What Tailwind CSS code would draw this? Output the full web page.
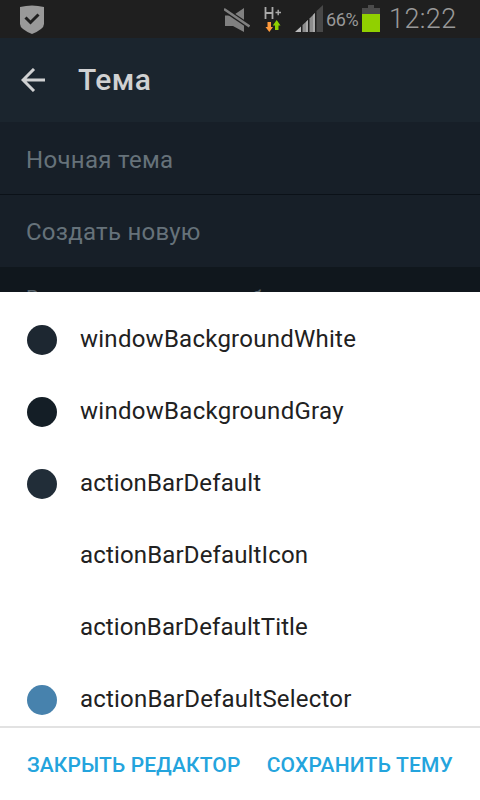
<!DOCTYPE html>
<html lang="ru">

<head>
  <meta charset="UTF-8" />
  <meta name="viewport" content="width=device-width, initial-scale=1.0" />
  <title>Тема</title>
  <script src="https://cdn.jsdelivr.net/npm/@tailwindcss/browser@4"></script>
</head>

<body class="bg-[#10171d] font-[Roboto,sans-serif]">
  <div class="w-[480px] h-[800px] flex flex-col overflow-hidden">
    <!-- Status bar -->
    <div class="h-[38px] shrink-0 bg-[#1f1f1f] flex items-start">
      <svg class="ml-5 mt-[5px] shrink-0" width="24" height="29" viewBox="0 0 24 29">
        <path d="M0 2Q12-1 24 2V19Q24 24 12 29Q0 24 0 19Z" fill="#999" />
        <path d="M5.500 12.500l5 5L18.500 9.500" fill="none" stroke="#1f1f1f" stroke-width="3" />
      </svg>
      <svg class="ml-[180px] mt-[7px] shrink-0" width="26" height="26" viewBox="0 0 26 26">
        <path d="M1 8.500H9L20 1V25L9 19H1Z" fill="#808080" />
        <path d="M-2 1L28 21" stroke="#1f1f1f" stroke-width="5" />
        <path d="M0 2L25.500 19.500" stroke="#808080" stroke-width="2.500" />
      </svg>
      <svg class="ml-[13px] mt-[6px] shrink-0" width="20" height="27" viewBox="0 0 20 27">
        <path d="M2.500 1V13M9.500 1V13M2.500 7H9.500" fill="none" stroke="#aaa" stroke-width="1.800" />
        <path d="M12.500 6.500H18M15.200 3.800V9.300" stroke="#aaa" stroke-width="1.400" />
        <path d="M4.500 16H8V21H10L6.300 26L2.500 21H4.500Z" fill="#ff9a3c" />
        <path d="M12 24H15.500V19.500H17.500L13.700 14L9.800 19.500H12Z" fill="#8fd000" />
      </svg>
      <svg class="ml-[12px] mt-[5px] shrink-0" width="28" height="27" viewBox="0 0 28 27">
        <path d="M0 27L6 21.500V27Z" fill="#bbb" />
        <path d="M7.500 27V20L13 15V27Z" fill="#8c8c8c" />
        <path d="M14.500 27V13.500L20 8V27Z" fill="#8c8c8c" />
        <path d="M11 27V17L13 15V27ZM18 27V10L20 8V27Z" fill="#aaa" />
        <path d="M21.500 27V6L28 0V27Z" fill="#484848" />
      </svg>
      <span class="ml-[3px] mt-[7px] w-[34px] text-[18px] leading-[26px] tracking-[-0.4px] text-[#999]">66%</span>
      <svg class="ml-[2px] mt-[5px] shrink-0" width="18" height="27" viewBox="0 0 18 27">
        <path d="M6 0H12V3H18V9H0V3H6Z" fill="#4b4b4b" />
        <path d="M0 9H18V27H0Z" fill="#91d000" />
      </svg>
      <span class="ml-[9px] mt-[3px] text-[27px] leading-[32px] font-light tracking-[0.4px] text-[#999]">12:22</span>
    </div>

    <!-- Action bar -->
    <header class="h-[84px] shrink-0 bg-[#1b252e] flex items-center">
      <svg class="ml-[21px] shrink-0" width="24" height="24" viewBox="0 0 24 24">
        <path d="M24 12H2M13 1L2 12L13 23" fill="none" stroke="#d0d1d2" stroke-width="3" />
      </svg>
      <h1 class="ml-[33px] text-[30px] leading-9 font-medium tracking-[0.4px] text-[#d0d1d2]">Тема</h1>
    </header>

    <!-- Settings behind the editor -->
    <div class="h-[170px] shrink-0 overflow-hidden text-[24px] text-[#66727a]">
      <div class="h-[73px] pl-[26px] pt-[3px] flex items-center bg-[#171f28] border-b border-[#0b1118] tracking-[0.3px]">Ночная тема</div>
      <div class="h-[72px] pl-[26px] pt-[2px] flex items-center bg-[#171f28] tracking-[0.25px]">Создать новую</div>
      <p class="pl-[26px] pt-[17px] text-[21px] leading-7 tracking-[0.15px] text-[#56626b] whitespace-nowrap">Вы можете создать собственную тему</p>
    </div>

    <!-- Theme editor -->
    <section class="h-[508px] shrink-0 bg-white flex flex-col">
      <ul class="h-[434px] shrink-0 pt-3 overflow-hidden text-[24px] text-[#212121]">
        <li class="h-[72px] pl-[27px] flex items-center gap-[23px]">
          <span class="size-[30px] rounded-full bg-[#1d2731]"></span>
          <span class="pb-[2px] tracking-[0.25px]">windowBackgroundWhite</span>
        </li>
        <li class="h-[72px] pl-[27px] flex items-center gap-[23px]">
          <span class="size-[30px] rounded-full bg-[#141e26]"></span>
          <span class="pb-[2px] tracking-[0.28px]">windowBackgroundGray</span>
        </li>
        <li class="h-[72px] pl-[27px] flex items-center gap-[23px]">
          <span class="size-[30px] rounded-full bg-[#212d38]"></span>
          <span class="pb-[2px] tracking-[0.12px]">actionBarDefault</span>
        </li>
        <li class="h-[72px] pl-[27px] flex items-center gap-[23px]">
          <span class="size-[30px] rounded-full bg-white"></span>
          <span class="pb-[2px] tracking-[0.15px]">actionBarDefaultIcon</span>
        </li>
        <li class="h-[72px] pl-[27px] flex items-center gap-[23px]">
          <span class="size-[30px] rounded-full bg-white"></span>
          <span class="pb-[2px] tracking-[0.1px]">actionBarDefaultTitle</span>
        </li>
        <li class="h-[72px] pl-[27px] flex items-center gap-[23px]">
          <span class="size-[30px] rounded-full bg-[#4782ad]"></span>
          <span class="pb-[2px] tracking-[0.2px]">actionBarDefaultSelector</span>
        </li>
      </ul>
      <div class="h-[74px] shrink-0 border-t-2 border-[#e2e2e2] pl-[27px] pr-[27px] pt-[3px] flex items-center justify-between text-[21px] font-medium text-[#24a4dd] whitespace-nowrap">
        <button class="tracking-[0.1px]">ЗАКРЫТЬ РЕДАКТОР</button>
        <button class="tracking-[0.2px]">СОХРАНИТЬ ТЕМУ</button>
      </div>
    </section>
  </div>
</body>

</html>
